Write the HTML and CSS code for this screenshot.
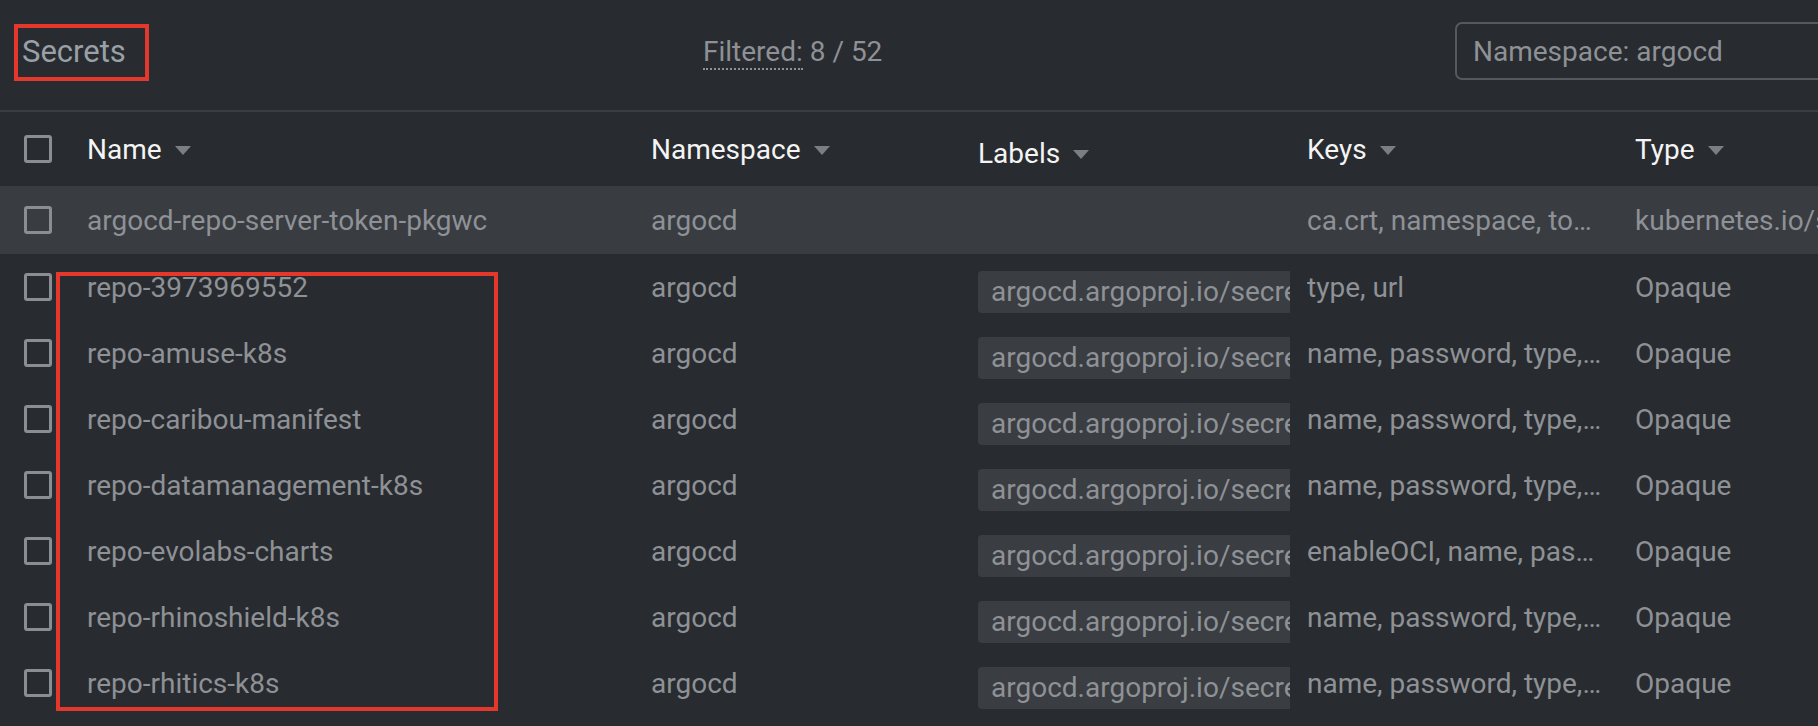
FILE: index.html
```html
<!DOCTYPE html>
<html lang="en">
<head>
<meta charset="utf-8">
<title>Secrets</title>
<link rel="stylesheet" href="styles.css">
</head>
<body>
<div class="page">
  <div class="toolbar">
    <div class="title">Secrets</div>
    <div class="filtered"><span class="dotted">Filtered:</span> 8 / 52</div>
    <div class="search">Namespace: argocd</div>
  </div>
  <div class="table">
    <div class="row head">
      <div class="c-check"><span class="box"></span></div>
      <div class="c-name">Name<span class="sort"></span></div>
      <div class="c-ns">Namespace<span class="sort"></span></div>
      <div class="c-labels">Labels<span class="sort"></span></div>
      <div class="c-keys">Keys<span class="sort"></span></div>
      <div class="c-type">Type<span class="sort"></span></div>
    </div>
    <div class="row hover">
      <div class="c-check"><span class="box"></span></div>
      <div class="c-name">argocd-repo-server-token-pkgwc</div>
      <div class="c-ns">argocd</div>
      <div class="c-labels"></div>
      <div class="c-keys">ca.crt, namespace, token</div>
      <div class="c-type">kubernetes.io/service-account-token</div>
    </div>
    <div class="row">
      <div class="c-check"><span class="box"></span></div>
      <div class="c-name">repo-3973969552</div>
      <div class="c-ns">argocd</div>
      <div class="c-labels"><span class="chip">argocd.argoproj.io/secret-type: repository</span></div>
      <div class="c-keys">type, url</div>
      <div class="c-type">Opaque</div>
    </div>
    <div class="row">
      <div class="c-check"><span class="box"></span></div>
      <div class="c-name">repo-amuse-k8s</div>
      <div class="c-ns">argocd</div>
      <div class="c-labels"><span class="chip">argocd.argoproj.io/secret-type: repository</span></div>
      <div class="c-keys">name, password, type, url, username</div>
      <div class="c-type">Opaque</div>
    </div>
    <div class="row">
      <div class="c-check"><span class="box"></span></div>
      <div class="c-name">repo-caribou-manifest</div>
      <div class="c-ns">argocd</div>
      <div class="c-labels"><span class="chip">argocd.argoproj.io/secret-type: repository</span></div>
      <div class="c-keys">name, password, type, url, username</div>
      <div class="c-type">Opaque</div>
    </div>
    <div class="row">
      <div class="c-check"><span class="box"></span></div>
      <div class="c-name">repo-datamanagement-k8s</div>
      <div class="c-ns">argocd</div>
      <div class="c-labels"><span class="chip">argocd.argoproj.io/secret-type: repository</span></div>
      <div class="c-keys">name, password, type, url, username</div>
      <div class="c-type">Opaque</div>
    </div>
    <div class="row">
      <div class="c-check"><span class="box"></span></div>
      <div class="c-name">repo-evolabs-charts</div>
      <div class="c-ns">argocd</div>
      <div class="c-labels"><span class="chip">argocd.argoproj.io/secret-type: repository</span></div>
      <div class="c-keys">enableOCI, name, password, type, url</div>
      <div class="c-type">Opaque</div>
    </div>
    <div class="row">
      <div class="c-check"><span class="box"></span></div>
      <div class="c-name">repo-rhinoshield-k8s</div>
      <div class="c-ns">argocd</div>
      <div class="c-labels"><span class="chip">argocd.argoproj.io/secret-type: repository</span></div>
      <div class="c-keys">name, password, type, url, username</div>
      <div class="c-type">Opaque</div>
    </div>
    <div class="row">
      <div class="c-check"><span class="box"></span></div>
      <div class="c-name">repo-rhitics-k8s</div>
      <div class="c-ns">argocd</div>
      <div class="c-labels"><span class="chip">argocd.argoproj.io/secret-type: repository</span></div>
      <div class="c-keys">name, password, type, url, username</div>
      <div class="c-type">Opaque</div>
    </div>
  </div>
  <div class="mark mark-title"></div>
  <div class="mark mark-names"></div>
</div>
</body>
</html>
```

FILE: styles.css
```css
html, body {
  margin: 0;
  padding: 0;
  background: #282b2f;
}
body {
  font-family: Roboto, "Liberation Sans", Arial, sans-serif;
  font-size: 28px;
  color: #8e9195;
  overflow: hidden;
}
.page {
  position: relative;
  width: 1818px;
  height: 726px;
  overflow: hidden;
}
.toolbar {
  height: 112px;
  box-sizing: border-box;
  padding: 0 0 8px 22px;
  display: grid;
  grid-template-columns: 681px 752px 520px;
  align-items: center;
  border-bottom: 2px solid #3a3d42;
}
.title {
  font-size: 31px;
  color: #9aa0a8;
}
.filtered {
  color: #8e9195;
}
.dotted {
  border-bottom: 2px dotted #8e9195;
}
.search {
  height: 58px;
  box-sizing: border-box;
  border: 2px solid #55595e;
  border-radius: 7px;
  padding-left: 16px;
  display: flex;
  align-items: center;
  color: #8e9195;
}
.row {
  display: grid;
  grid-template-columns: 63px 564px 327px 329px 328px 1fr;
  align-items: center;
  height: 66px;
  padding-left: 24px;
  white-space: nowrap;
}
.row.head {
  height: 74px;
  color: #f4f4f4;
}
.row.hover {
  height: 68px;
  background: #393c41;
}
.c-check {
  display: flex;
  align-items: center;
}
.box {
  width: 28px;
  height: 28px;
  box-sizing: border-box;
  border: 3px solid #8a8d91;
  border-radius: 3px;
}
.c-name, .c-ns, .c-type {
  overflow: hidden;
}
.c-labels {
  overflow: hidden;
  width: 312px;
  padding-top: 10px;
}
.head .c-labels {
  padding-top: 8px;
}
.c-keys {
  overflow: hidden;
  text-overflow: ellipsis;
  width: 298px;
}
.head .c-keys {
  overflow: visible;
}
.sort {
  display: inline-block;
  width: 0;
  height: 0;
  margin-left: 13px;
  vertical-align: 4px;
  border-left: 8px solid transparent;
  border-right: 8px solid transparent;
  border-top: 9px solid #7b7e83;
}
.chip {
  display: inline-block;
  height: 42px;
  line-height: 42px;
  padding: 0 13px;
  border-radius: 4px;
  background: #3a3d42;
  color: #8e9195;
}
.mark {
  position: absolute;
  border: 4px solid #e5382c;
  box-sizing: border-box;
  pointer-events: none;
}
.mark-title {
  left: 14px;
  top: 24px;
  width: 135px;
  height: 57px;
}
.mark-names {
  left: 56px;
  top: 272px;
  width: 442px;
  height: 439px;
}
```
